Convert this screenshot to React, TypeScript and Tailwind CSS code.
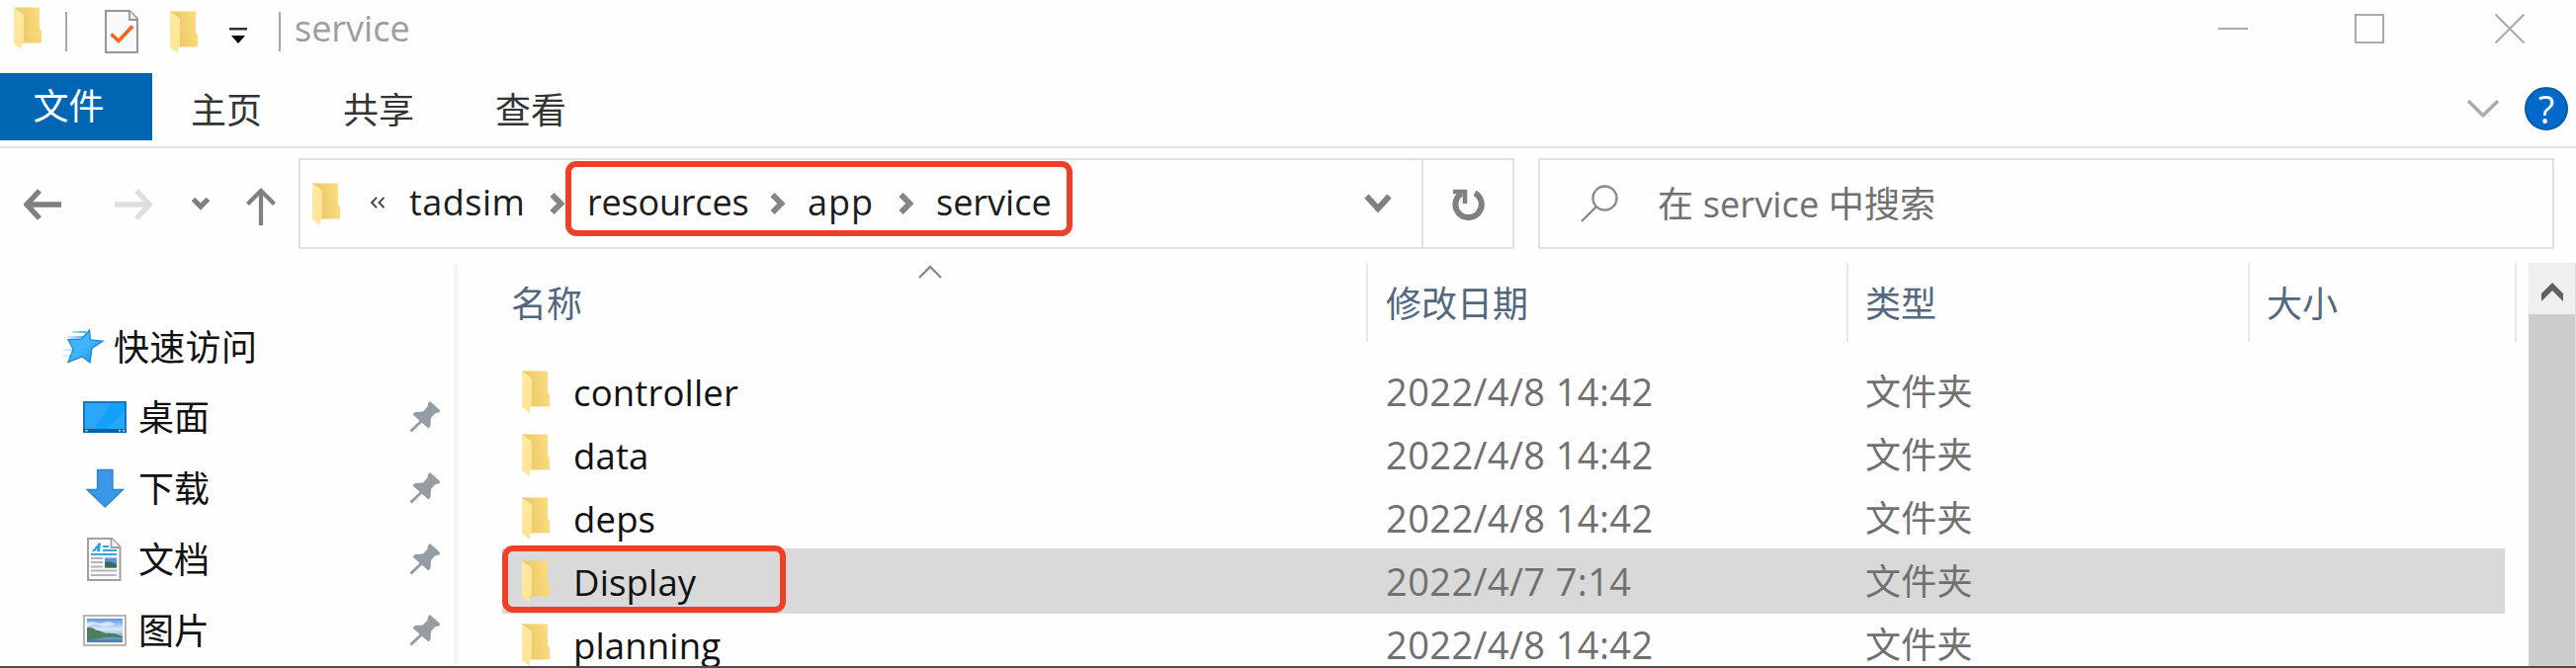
import type { ReactNode } from "react";

function Folder({ className = "" }: { className?: string }) {
  return (
    <svg viewBox="0 0 28 43" className={`h-[43px] w-7 shrink-0 ${className}`}>
      <defs>
        <linearGradient id="folderBack" x1="0" x2="1" y1="0.7" y2="0.5">
          <stop offset="0.25" stopColor="#edc869" />
          <stop offset="1" stopColor="#fbdc7e" />
        </linearGradient>
        <linearGradient id="folderFront" x1="0" x2="0.4" y2="1">
          <stop offset="0" stopColor="#ffe9a6" />
          <stop offset="1" stopColor="#ffe594" />
        </linearGradient>
      </defs>
      <path d="M0 .5h26v21.500l2 2.500V36.500H1z" fill="url(#folderBack)" />
      <path d="M0 .5l8 5.500q2 1.300 2 3.500V35l-2 1.500V43L0 37z" fill="url(#folderFront)" />
    </svg>
  );
}

function Crumb() {
  return (
    <svg viewBox="0 0 16 24" className="h-6 w-4 shrink-0" fill="none" stroke="#858585" strokeWidth="6">
      <path d="M2.500 3l8.800 9-8.800 9" />
    </svg>
  );
}

function Pin() {
  return (
    <svg viewBox="0 0 32 32" className="h-8 w-8 shrink-0" fill="#949da4">
      <path d="M21 0L31.500 9.500 30 11.500 26.500 12 22 17 21.500 25 19.500 27.500 12 21 3.500 13.500 6 11 14 10.500 18.500 5.500 19 2z" />
      <path d="M13 19.500L1.500 30.500" stroke="#949da4" strokeWidth="3" />
    </svg>
  );
}

function Star() {
  return (
    <svg viewBox="0 0 46 38" className="h-[38px] w-[46px] shrink-0">
      <defs>
        <linearGradient id="star" x1="0" x2="1" y1="0" y2="1">
          <stop offset="0" stopColor="#3fb2f7" />
          <stop offset="0.5" stopColor="#40b4fb" />
          <stop offset="1" stopColor="#1b8ade" />
        </linearGradient>
        <linearGradient id="trail" x1="0" x2="1">
          <stop offset="0" stopColor="#69c1f5" stopOpacity="0" />
          <stop offset="1" stopColor="#4aaeea" />
        </linearGradient>
      </defs>
      <path d="M13 3h14v2H13zM9 8h16v2H9zM3 21h12v2H3zM0 27h13v2H0z" fill="url(#trail)" />
      <path d="M30.500 2L31.500 12 44 13.200 33 20.500 31 34.800 23 28.800 9 34.500 14 21.500 9 11.500 22.500 11z" fill="url(#star)" stroke="#2288cf" strokeWidth="1.300" />
    </svg>
  );
}

function Desktop() {
  return (
    <svg viewBox="0 0 44 32" className="h-8 w-11 shrink-0">
      <rect x="1" y="1" width="42" height="30" fill="#12a0fb" stroke="#0f79c4" strokeWidth="2" />
      <path d="M2 2h27L11 28H2z" fill="#2ba6fb" />
      <path d="M42 10v18H24z" fill="#33abfa" opacity=".6" />
      <path d="M0 28h44v4H0z" fill="#0b62a0" />
      <path d="M2.500 29h2v1.500h-2zM36 29h2v1.500h-2zM40 29h2v1.500h-2z" fill="#d9efff" />
    </svg>
  );
}

function Download() {
  return (
    <svg viewBox="0 0 44 40" className="h-10 w-11 shrink-0">
      <path d="M14.500 1.500h15.500v20h10.500L22.200 39 4 21.500h10.500z" fill="#3a98e6" stroke="#2a82cf" strokeWidth="1.300" />
    </svg>
  );
}

function Document() {
  return (
    <svg viewBox="0 0 44 44" className="h-11 w-11 shrink-0">
      <path d="M5 1h24l8.500 8.500V43H5z" fill="#fbfbfb" stroke="#a0a0a0" strokeWidth="2" />
      <path d="M28.500 1v9h9" fill="#f4f4f4" stroke="#a0a0a0" strokeWidth="1.800" />
      <path d="M9 14l7-8.500h2L17 14h-3l.3-3-2.300 3z" fill="#2f9fe0" />
      <path d="M20 9h6M20 13h14M8 17h26" stroke="#35a3de" strokeWidth="2" />
      <path d="M8 21h12M8 25h12M8 29.500h12M8 33.500h26M8 38h26" stroke="#b5b5b5" strokeWidth="2" />
      <rect x="22" y="20.500" width="12" height="10" fill="#5a94d0" />
      <path d="M22 25q4-2 12 2v3.500H22z" fill="#3e6660" />
    </svg>
  );
}

function Picture() {
  return (
    <svg viewBox="0 0 44 32" className="h-8 w-11 shrink-0">
      <defs>
        <linearGradient id="sky" x1="0" x2="0" y1="0" y2="1">
          <stop offset="0" stopColor="#5d93ea" />
          <stop offset="0.45" stopColor="#d8ecfb" />
          <stop offset="0.7" stopColor="#8fb6da" />
          <stop offset="1" stopColor="#3e75ae" />
        </linearGradient>
      </defs>
      <rect x="1" y="1" width="42" height="30" fill="#fff" stroke="#b5b5b5" strokeWidth="2" />
      <rect x="4" y="4" width="36" height="24" fill="url(#sky)" />
      <path d="M4 13q5-1 9 2.500 6 1 10 3.500 9-1 17 3v1.500Q26 22 16 24l-12 2z" fill="#4b8060" />
      <path d="M4 8q5-2 9 0t11-1q6 0 8 3-9 3-14 1t-14 1z" fill="#fff" opacity=".6" />
    </svg>
  );
}

const places: { icon: ReactNode; label: string }[] = [
  { icon: <Desktop />, label: "桌面" },
  { icon: <Download />, label: "下载" },
  { icon: <Document />, label: "文档" },
  { icon: <Picture />, label: "图片" },
];

const files = [
  { name: "controller", date: "2022/4/8 14:42" },
  { name: "data", date: "2022/4/8 14:42" },
  { name: "deps", date: "2022/4/8 14:42" },
  { name: "Display", date: "2022/4/7 7:14", selected: true },
  { name: "planning", date: "2022/4/8 14:42" },
];

function TitleBar() {
  return (
    <header className="flex h-[74px] items-start">
      <Folder className="mt-[7px] ml-[14px]" />
      <div className="mt-3 ml-6 h-10 w-0.5 bg-[#a6a6a6]" />
      <svg viewBox="0 0 34 44" className="mt-[10px] ml-[38px] h-11 w-[34px]">
        <path d="M1 1h24l8 8v34H1z" fill="#f8f9fa" stroke="#979797" strokeWidth="2" />
        <path d="M25 1v9h8" fill="#eee" stroke="#979797" strokeWidth="1.800" />
        <path d="M6.500 24.500l7.500 7 14-15" fill="none" stroke="#f8641a" strokeWidth="3.600" />
      </svg>
      <Folder className="mt-[11px] ml-[32px]" />
      <svg viewBox="0 0 18 16" className="mt-7 ml-8 h-4 w-[18px]">
        <path d="M0 0h18v2.500H0z" fill="#333" />
        <path d="M2 8h14l-7 8z" fill="#000" />
      </svg>
      <div className="mt-3 ml-8 h-10 w-0.5 bg-[#a6a6a6]" />
      <span className="mt-[11px] ml-[14px] leading-9 text-[#9d9d9d]">service</span>
      <svg viewBox="0 0 310 30" className="mt-[14px] mr-[52px] ml-auto h-[30px] w-[310px]" fill="none" stroke="#aaa" strokeWidth="2">
        <path d="M0 15h30M139 1h28v28h-28zM280.500.500l29 29M309.500.500l-29 29" />
      </svg>
    </header>
  );
}

function Ribbon() {
  return (
    <nav className="flex h-[76px] items-start border-b-2 border-[#e2e2e2] text-[#333]">
      <div className="flex h-[68px] w-[154px] items-center justify-center bg-[#0066b4] pr-[15px] text-white">文件</div>
      <span className="mt-[1px] ml-[39px] w-[154px] leading-[74px]">主页</span>
      <span className="mt-[1px] w-[154px] leading-[74px]">共享</span>
      <span className="mt-[1px] w-[154px] leading-[74px]">查看</span>
      <svg viewBox="0 0 32 18" className="mt-[27px] ml-auto h-[18px] w-8" fill="none" stroke="#acacac" strokeWidth="3.600">
        <path d="M1 1.200l15 14.500L31 1.200" />
      </svg>
      <div className="mt-[14px] mr-2 ml-[26px] flex h-11 w-11 items-center justify-center rounded-full border-2 border-[#075ba8] bg-[#0069ca] text-[38px] leading-none text-white">
        ?
      </div>
    </nav>
  );
}

function AddressBar() {
  return (
    <div className="flex h-[116px] items-start pt-[10px]">
      <svg viewBox="0 0 256 38" className="mt-[30px] ml-6 h-[38px] w-64" fill="none" stroke="#808080">
        <path d="M38 17H3M16 3L3 17l13 14" strokeWidth="5.500" />
        <path d="M92 17h35M114 3l13 14-13 14" stroke="#dedede" strokeWidth="5.500" />
        <path d="M171.500 11.500l7.500 7.500 7.500-7.500" strokeWidth="5.200" />
        <path d="M240 38V3M226.500 16.500L240 3l13.500 13.500" strokeWidth="4.200" />
      </svg>
      <div className="relative ml-[22px] flex h-[92px] w-[1230px] items-center border-2 border-[#e0e0e0] text-[#1c1c1c]">
        <Folder className="ml-3" />
        <svg viewBox="0 0 16 12" className="mt-[-3px] ml-[30px] h-3 w-4" fill="none" stroke="#444" strokeWidth="1.900">
          <path d="M7 .8L2 6l5 5.200M14.500.8L9.500 6l5 5.200" />
        </svg>
        <span className="ml-6 w-[142px] pb-[2px] leading-9 tracking-[0.5px]">tadsim</span>
        <Crumb />
        <span className="ml-[22px] w-[185px] pb-[2px] leading-9 tracking-[-0.2px]">resources</span>
        <Crumb />
        <span className="ml-[22px] w-[92px] pb-[2px] leading-9 tracking-[1px]">app</span>
        <Crumb />
        <span className="ml-[22px] w-[120px] pb-[2px] leading-9">service</span>
        <svg viewBox="0 0 28 20" className="ml-auto h-5 w-7" fill="none" stroke="#808080" strokeWidth="6">
          <path d="M2.500 2.500L14 15l11.500-12.500" />
        </svg>
        <div className="ml-[30px] flex h-full w-[92px] items-center justify-center border-l-2 border-[#e0e0e0]">
          <svg viewBox="0 0 34 34" className="h-[34px] w-[34px]" fill="none" stroke="#808080">
            <path d="M24 6.300A13.200 13.200 0 1 1 10.500 6.700" strokeWidth="6" />
            <path d="M2 5h14.200M14 3v14" strokeWidth="4.500" />
          </svg>
        </div>
        <div className="absolute top-[1px] left-[268px] h-[76px] w-[513px] rounded-[11px] border-[6px] border-[#ee4026]" />
      </div>
      <div className="ml-6 flex h-[92px] w-[1028px] items-center border-2 border-[#e0e0e0] text-[#707070]">
        <svg viewBox="0 0 38 38" className="ml-[41px] h-[38px] w-[38px]" fill="none" stroke="#8a8a8a" strokeWidth="2.400">
          <circle cx="24.500" cy="13.500" r="12" />
          <path d="M16 22L1 37" />
        </svg>
        <span className="mt-[2px] ml-10 leading-9 tracking-[0.15px]">在 service 中搜索</span>
      </div>
    </div>
  );
}

function Sidebar() {
  return (
    <aside className="flex w-[463px] shrink-0 flex-col border-r-4 border-[#f6f6f6] pt-[50px] text-[#111]">
      <div className="flex h-[72px] items-center pl-[60px]">
        <Star />
        <span className="mt-[2px] ml-[9px] leading-9 tracking-[0.3px]">快速访问</span>
      </div>
      {places.map((p) => (
        <div key={p.label} className="flex h-[72px] shrink-0 items-center pr-[13px] pl-[84px]">
          {p.icon}
          <span className="mt-[2px] ml-3 flex-1 leading-9">{p.label}</span>
          <Pin />
        </div>
      ))}
    </aside>
  );
}

function FileList() {
  return (
    <main className="w-[2083px] shrink-0">
      <div className="flex h-20 text-[#53677f]">
        <div className="relative w-[919px] pl-[54px] leading-[84px]">
          名称
          <svg viewBox="0 0 24 14" className="absolute top-[2px] left-[466px] h-[14px] w-6" fill="none" stroke="#8a8a8a" strokeWidth="2.400">
            <path d="M1 13L12 2l11 11" />
          </svg>
        </div>
        <div className="w-[486px] border-l-2 border-[#e8e8e8] pl-[18px] leading-[84px]">修改日期</div>
        <div className="w-[406px] border-l-2 border-[#e8e8e8] pl-[17px] leading-[84px]">类型</div>
        <div className="w-[272px] border-x-2 border-[#e8e8e8] pl-[17px] leading-[84px]">大小</div>
      </div>
      <div className="mt-[18px] ml-[45px] w-[2026px]">
        {files.map((f) => (
          <div key={f.name} className={`relative flex h-16 items-center pl-5 ${f.selected ? "bg-[#d9d9d9] shadow-[0_1px_0_#d9d9d9,0_-1px_0_#d9d9d9]" : ""}`}>
            <Folder />
            <span className="mt-[2px] ml-6 w-[822px] text-[36.500px] leading-9 tracking-[0.15px] text-[#111]">{f.name}</span>
            <span className="w-[485px] text-[38px] leading-9 tracking-[0.4px] text-[#707070]">{f.date}</span>
            <span className="mt-[2px] leading-9 tracking-[0.3px] text-[#707070]">文件夹</span>
            {f.selected && (
              <div className="absolute -top-[4px] left-0 h-[68px] w-[287px] rounded-[11px] border-[6px] border-[#ee4026]" />
            )}
          </div>
        ))}
      </div>
    </main>
  );
}

export default function App() {
  return (
    <div className="flex h-[676px] w-[2606px] flex-col overflow-hidden border-b-2 border-[#4d4d4d] bg-[#fefefe] font-['Open_Sans','Noto_Sans_CJK_SC',sans-serif] text-[36px]">
      <TitleBar />
      <Ribbon />
      <AddressBar />
      <div className="flex min-h-0 flex-1 overflow-hidden">
        <Sidebar />
        <FileList />
        <div className="ml-auto flex w-12 flex-col border-r border-[#ddd] bg-[#cdcdcd]">
          <div className="flex h-[52px] justify-center bg-[#efefef] pt-5">
            <svg viewBox="0 0 24 20" className="h-5 w-6" fill="#606060">
              <path d="M12 0l11 11v8L12 8 1 19v-8z" />
            </svg>
          </div>
        </div>
      </div>
    </div>
  );
}
